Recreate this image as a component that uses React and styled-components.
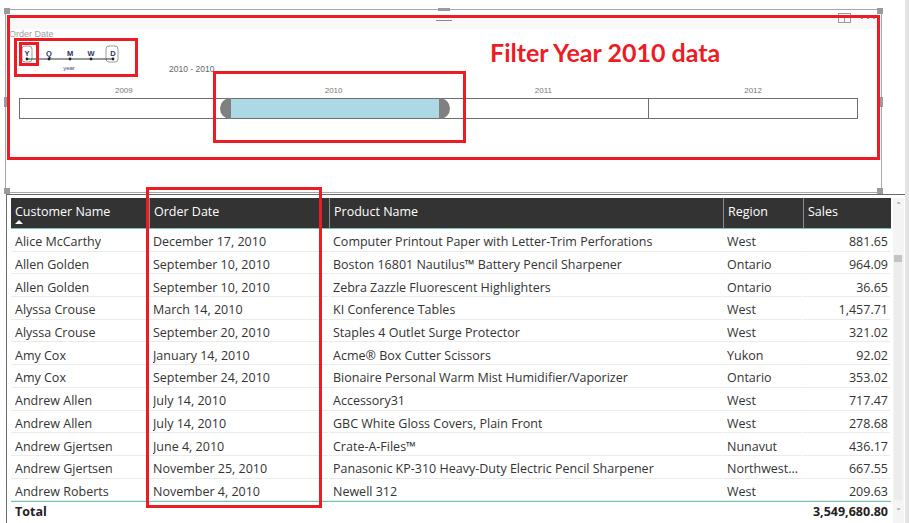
import React from 'react';
import styled, { createGlobalStyle } from 'styled-components';

const GlobalStyle = createGlobalStyle`
  html, body {
    margin: 0;
    padding: 0;
    background: #fff;
    overflow: hidden;
  }
  body {
    font-family: "Open Sans", "Noto Sans", sans-serif;
  }
`;

const rows = [
  ['Alice McCarthy', 'December 17, 2010', 'Computer Printout Paper with Letter-Trim Perforations', 'West', '881.65'],
  ['Allen Golden', 'September 10, 2010', 'Boston 16801 Nautilus™ Battery Pencil Sharpener', 'Ontario', '964.09'],
  ['Allen Golden', 'September 10, 2010', 'Zebra Zazzle Fluorescent Highlighters', 'Ontario', '36.65'],
  ['Alyssa Crouse', 'March 14, 2010', 'KI Conference Tables', 'West', '1,457.71'],
  ['Alyssa Crouse', 'September 20, 2010', 'Staples 4 Outlet Surge Protector', 'West', '321.02'],
  ['Amy Cox', 'January 14, 2010', 'Acme® Box Cutter Scissors', 'Yukon', '92.02'],
  ['Amy Cox', 'September 24, 2010', 'Bionaire Personal Warm Mist Humidifier/Vaporizer', 'Ontario', '353.02'],
  ['Andrew Allen', 'July 14, 2010', 'Accessory31', 'West', '717.47'],
  ['Andrew Allen', 'July 14, 2010', 'GBC White Gloss Covers, Plain Front', 'West', '278.68'],
  ['Andrew Gjertsen', 'June 4, 2010', 'Crate-A-Files™', 'Nunavut', '436.17'],
  ['Andrew Gjertsen', 'November 25, 2010', 'Panasonic KP-310 Heavy-Duty Electric Pencil Sharpener', 'Northwest Territories', '667.55'],
  ['Andrew Roberts', 'November 4, 2010', 'Newell 312', 'West', '209.63'],
];

const years = ['2009', '2010', '2011', '2012'];
const ticks = [11, 33, 54, 75, 97];

const App = () => {
  return (
    <Page>
      <GlobalStyle />
      <Main>
        <SlicerFrame>
          <TopStrip>
            <span />
            <Grip />
            <StripIcons>
              <svg width="13" height="10" viewBox="0 0 13 10">
                <rect x="0.5" y="0.5" width="12" height="9" fill="none" stroke="#9a9a9a" />
                <rect x="0.5" y="4.5" width="6" height="5" fill="none" stroke="#9a9a9a" />
              </svg>
              <svg width="16" height="4" viewBox="0 0 16 4">
                <circle cx="2" cy="2" r="1.1" fill="#888" />
                <circle cx="8" cy="2" r="1.1" fill="#888" />
                <circle cx="14" cy="2" r="1.1" fill="#888" />
              </svg>
            </StripIcons>
          </TopStrip>
          <FieldLabel>Order Date</FieldLabel>
          <ControlRow>
            <svg width="110" height="30" viewBox="0 0 110 30">
              <rect x="6" y="2" width="10" height="16" rx="3" fill="none" stroke="#9c9c9c" />
              <rect x="90" y="2" width="12" height="16" rx="3" fill="none" stroke="#9c9c9c" />
              <line x1="11" y1="15" x2="97" y2="15" stroke="#333" strokeWidth="1" />
              {ticks.map((x) => (
                <circle key={x} cx={x} cy="15" r="1.4" fill="#222" />
              ))}
              {['Y', 'Q', 'M', 'W', 'D'].map((l, i) => (
                <text key={l} x={ticks[i]} y="12" textAnchor="middle" fontSize="7.5" fontWeight="700" fill="#2a3160" fontFamily="Liberation Sans, sans-serif">{l}</text>
              ))}
              <text x="53" y="26" textAnchor="middle" fontSize="6" fill="#3d4a7a" fontFamily="Liberation Sans, sans-serif">year</text>
            </svg>
            <RangeText>2010 - 2010</RangeText>
          </ControlRow>
          <Timeline>
            <YearLabels>
              {years.map((y) => (
                <YearLabel key={y}>{y}</YearLabel>
              ))}
            </YearLabels>
            <Bar>
              {years.map((y) => (
                <Segment key={y} $selected={y === '2010'}>
                  {y === '2010' && (
                    <>
                      <Handle $side="left" />
                      <Handle $side="right" />
                    </>
                  )}
                </Segment>
              ))}
            </Bar>
          </Timeline>
          <Corner style={{ left: -2, top: -2 }} />
          <Corner style={{ right: -2, top: -2 }} />
          <Corner style={{ left: -2, bottom: -2 }} />
          <Corner style={{ right: -2, bottom: -2 }} />
          <TopHandle />
          <SideHandle style={{ left: -2 }} />
          <SideHandle style={{ right: -2 }} />
        </SlicerFrame>
        <TableFrame>
          <Table>
            <HeadCell>
              Customer Name
              <SortArrow />
            </HeadCell>
            <HeadCell $divider>Order Date</HeadCell>
            <HeadCell $divider>Product Name</HeadCell>
            <HeadCell $divider>Region</HeadCell>
            <HeadCell $divider>Sales</HeadCell>
            {rows.map((r, i) =>
              r.map((c, j) => (
                <Cell key={i + '-' + j} $right={j === 4}>
                  <CellText>{c}</CellText>
                </Cell>
              ))
            )}
            <TotalCell>Total</TotalCell>
            <TotalCell />
            <TotalCell />
            <TotalCell />
            <TotalCell $right>3,549,680.80</TotalCell>
          </Table>
          <ScrollBar>
            <ScrollArrow>⌃</ScrollArrow>
            <ScrollTrack>
              <ScrollThumb />
            </ScrollTrack>
            <ScrollArrow>⌄</ScrollArrow>
          </ScrollBar>
        </TableFrame>
      </Main>
      <PageStrip />

      <RedBox style={{ left: 7, top: 15, width: 873, height: 145 }} />
      <RedBox style={{ left: 14, top: 38, width: 124, height: 39 }} />
      <RedBox style={{ left: 19, top: 42, width: 20, height: 24 }} />
      <RedBox style={{ left: 213, top: 71, width: 253, height: 72 }} />
      <RedBox style={{ left: 146, top: 187, width: 176, height: 321 }} />
      <Callout>Filter Year 2010 data</Callout>
    </Page>
  );
};

const Page = styled.div`
  position: relative;
  width: 909px;
  height: 523px;
  overflow: hidden;
  background: #fff;
  display: flex;
`;

const Main = styled.div`
  width: 905px;
  padding: 9px 0 0 5px;
  box-sizing: border-box;
  display: flex;
  flex-direction: column;
`;

const PageStrip = styled.div`
  width: 4px;
  background: #e4e4e4;
`;

const SlicerFrame = styled.div`
  position: relative;
  width: 877px;
  height: 184px;
  box-sizing: border-box;
  border: 1px solid #a8a8a8;
  display: flex;
  flex-direction: column;
`;

const TopStrip = styled.div`
  height: 19px;
  display: grid;
  grid-template-columns: 1fr auto 1fr;
  align-items: center;
  background: linear-gradient(#fff 5px, #f8f8f8 5px);
`;

const Grip = styled.div`
  width: 16px;
  height: 1px;
  margin-top: 1px;
  background: #8a8a8a;
`;

const StripIcons = styled.div`
  justify-self: end;
  display: flex;
  align-items: center;
  gap: 9px;
  padding-right: 5px;
  margin-top: -3px;
`;

const FieldLabel = styled.div`
  padding-left: 3px;
  font-family: "Liberation Sans", sans-serif;
  font-size: 9px;
  line-height: 10px;
  color: #a0a0a0;
`;

const ControlRow = styled.div`
  display: flex;
  align-items: flex-end;
  margin-top: 5px;
  padding-left: 10px;
  height: 30px;
`;

const RangeText = styled.div`
  margin-left: 43px;
  font-family: "Liberation Sans", sans-serif;
  font-size: 8.5px;
  line-height: 10px;
  color: #666;
`;

const Timeline = styled.div`
  margin: 12px 23px 0 13px;
`;

const YearLabels = styled.div`
  display: grid;
  grid-template-columns: repeat(4, 1fr);
`;

const YearLabel = styled.div`
  text-align: center;
  font-family: "Liberation Sans", sans-serif;
  font-size: 8px;
  line-height: 10px;
  color: #777;
`;

const Bar = styled.div`
  margin-top: 2px;
  height: 21px;
  box-sizing: border-box;
  border: 1px solid #6e6e6e;
  display: grid;
  grid-template-columns: repeat(4, 1fr);
`;

const Segment = styled.div`
  position: relative;
  border-left: 1px solid #6e6e6e;
  background: ${(p) => (p.$selected ? '#add8e6' : '#fff')};
  &:first-child {
    border-left: none;
  }
`;

const Handle = styled.div`
  position: absolute;
  z-index: 1;
  top: -1px;
  bottom: -1px;
  width: 11px;
  background: #808080;
  ${(p) =>
    p.$side === 'left'
      ? 'left: -10px; border-radius: 11px 0 0 11px;'
      : 'right: -11px; border-radius: 0 11px 11px 0;'}
`;

const Corner = styled.div`
  position: absolute;
  width: 6px;
  height: 6px;
  background: #9a9a9a;
`;

const TopHandle = styled.div`
  position: absolute;
  top: -2px;
  left: 432px;
  width: 12px;
  height: 3px;
  background: #9a9a9a;
`;

const SideHandle = styled.div`
  position: absolute;
  top: 87px;
  width: 3px;
  height: 10px;
  background: #9a9a9a;
`;

const TableFrame = styled.div`
  margin: 1px 0 0 1px;
  flex: 1;
  width: 900px;
  box-sizing: border-box;
  border: 1px solid #6a6a6a;
  border-bottom: none;
  padding: 3px 0 0 4px;
  display: flex;
  gap: 2px;
`;

const Table = styled.div`
  width: 880px;
  display: grid;
  grid-template-columns: 138px 180px 394px 80px 88px;
  grid-template-rows: 31px repeat(12, 22.7px) 20px;
  align-content: start;
`;

const HeadCell = styled.div`
  position: relative;
  background: #333;
  color: #fff;
  font-size: 12.5px;
  line-height: 18px;
  padding: 5px 4px 0;
  box-sizing: border-box;
  border-left: ${(p) => (p.$divider ? '1px solid #8c8c8c' : 'none')};
  border-bottom: 1px solid #78c3b4;
  white-space: nowrap;
`;

const SortArrow = styled.div`
  position: absolute;
  left: 4px;
  top: 22px;
  width: 0;
  height: 0;
  border-left: 4px solid transparent;
  border-right: 4px solid transparent;
  border-bottom: 4px solid #fff;
`;

const Cell = styled.div`
  position: relative;
  display: flex;
  align-items: center;
  justify-content: ${(p) => (p.$right ? 'flex-end' : 'flex-start')};
  padding: 3px ${(p) => (p.$right ? '3px' : '4px')} 0 4px;
  box-sizing: border-box;
  min-width: 0;
  font-size: 12.5px;
  color: #333;
  &::after {
    content: '';
    position: absolute;
    left: 0;
    right: 1px;
    bottom: 0;
    height: 1px;
    background: #ebebeb;
  }
`;

const CellText = styled.span`
  white-space: nowrap;
  overflow: hidden;
  text-overflow: ellipsis;
`;

const TotalCell = styled.div`
  display: flex;
  align-items: center;
  justify-content: ${(p) => (p.$right ? 'flex-end' : 'flex-start')};
  padding: 0 ${(p) => (p.$right ? '3px' : '4px')} 0 4px;
  border-top: 1px solid #6cc5b0;
  font-size: 12.5px;
  font-weight: 700;
  color: #222;
`;

const ScrollBar = styled.div`
  width: 11px;
  display: flex;
  flex-direction: column;
  background: #f4f4f4;
`;

const ScrollArrow = styled.div`
  height: 14px;
  display: flex;
  align-items: center;
  justify-content: center;
  font-family: "DejaVu Sans", sans-serif;
  font-size: 8px;
  color: #888;
`;

const ScrollTrack = styled.div`
  height: 288px;
  padding: 43px 2px 0 1px;
  box-sizing: border-box;
  display: flex;
  flex-direction: column;
`;

const ScrollThumb = styled.div`
  flex: 1;
  background: linear-gradient(#c4c4c4 7px, #ececec 7px);
`;

const RedBox = styled.div`
  position: absolute;
  box-sizing: border-box;
  border: 3px solid #ed1c24;
  pointer-events: none;
`;

const Callout = styled.div`
  position: absolute;
  left: 490px;
  top: 37px;
  font-family: Lato, "Liberation Sans", sans-serif;
  font-weight: 700;
  font-size: 25px;
  line-height: 30px;
  letter-spacing: 0;
  color: #ed1c24;
  white-space: nowrap;
`;

export default App;
